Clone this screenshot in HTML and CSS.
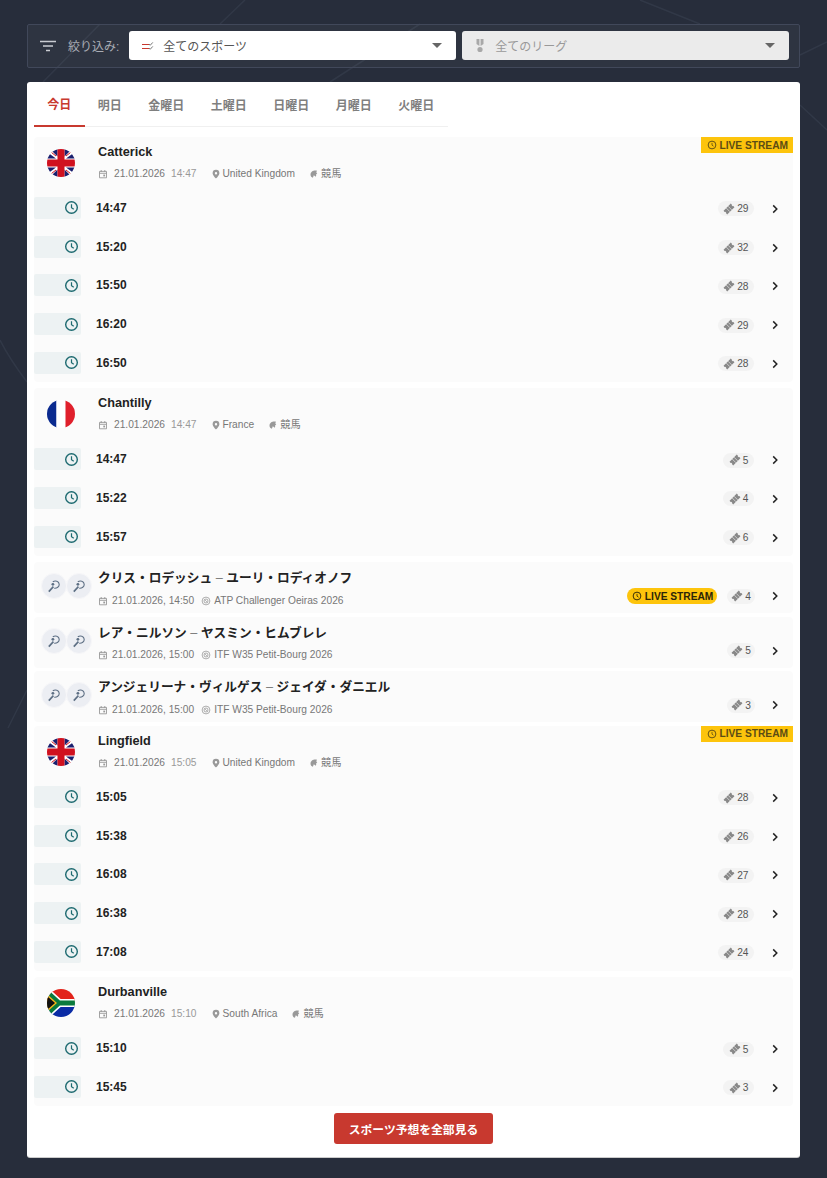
FILE: index.html
```html
<!DOCTYPE html>
<html lang="ja">
<head>
  <meta charset="UTF-8">
  <meta name="viewport" content="width=device-width, initial-scale=1.0">
  <title>スポーツ予想</title>
  <link rel="stylesheet" href="styles.css">
</head>
<body>

  <!-- Icon sprite -->
  <svg class="sprite" width="0" height="0">
    <symbol id="i-clock" viewBox="0 0 16 16"><circle cx="8" cy="8" r="6.2" fill="none" stroke="currentColor" stroke-width="1.5"/><path d="M8 4.6V8.2l2.4 1.7" fill="none" stroke="currentColor" stroke-width="1.3"/></symbol>
    <symbol id="i-ticket" viewBox="0 0 14 14"><g transform="rotate(-45 7 7)"><path d="M1 4h12v1.800a1.300 1.300 0 0 0 0 2.400V10H1V8.200a1.300 1.300 0 0 0 0-2.400z" fill="currentColor"/><path d="M5.500 4v6M8.500 4v6" stroke="#f3f3f3" stroke-width=".7"/></g></symbol>
    <symbol id="i-chevron" viewBox="0 0 8 10"><path d="M2.2 1.4 5.800 5 2.200 8.600" fill="none" stroke="currentColor" stroke-width="1.5"/></symbol>
    <symbol id="i-calendar" viewBox="0 0 10 10"><path d="M1.500 2.400h7v6.400h-7zM1.500 4.300h7M3.200 1v2M6.800 1v2" fill="none" stroke="currentColor" stroke-width=".9"/><rect x="5.300" y="5.600" width="1.800" height="1.800" fill="currentColor"/></symbol>
    <symbol id="i-pin" viewBox="0 0 10 10"><path fill-rule="evenodd" d="M5 .8a3.400 3.400 0 0 1 3.400 3.400C8.400 6.400 5 9.400 5 9.400S1.600 6.400 1.600 4.200A3.400 3.400 0 0 1 5 .8zm0 2.200a1.200 1.200 0 1 0 0 2.400 1.200 1.200 0 0 0 0-2.400z" fill="currentColor"/></symbol>
    <symbol id="i-horse" viewBox="0 0 10 10"><path d="M7.800 1.600C5 .9 1.500 2.300 1.500 5.600c0 1.700 1 2.900 2.400 3.200l.9-2.500 2 1.400c.5-.8.5-1.700.2-2.400l1.300-.4-.9-1.200z" fill="currentColor"/></symbol>
    <symbol id="i-target" viewBox="0 0 10 10"><circle cx="5" cy="5" r="3.900" fill="none" stroke="currentColor" stroke-width=".8"/><circle cx="5" cy="5" r="2" fill="none" stroke="currentColor" stroke-width=".8"/><path d="M3.600 3.600 6.400 6.400" stroke="currentColor" stroke-width=".7"/></symbol>
    <symbol id="i-racket" viewBox="0 0 16 16"><path d="M6.800 3.800C9.200 2.200 13 3 13.200 6.200 13.400 8.800 10.800 10.500 8.200 10.200" fill="none" stroke="currentColor" stroke-width="1.100"/><path d="M7.400 8.600 2.800 13.600" stroke="currentColor" stroke-width="1.600"/><circle cx="6.900" cy="6.300" r="1.400" fill="currentColor"/></symbol>
    <symbol id="i-flag-uk" viewBox="0 0 28 28"><rect width="28" height="28" fill="#fff"/><path d="M0 3 9 9.500H0zM3 0h7.500v7.500zM28 3l-9 6.500h9zM25 0h-7.500v7.500zM0 25l9-6.500H0zM3 28h7.500v-7.500zM28 25l-9-6.500h9zM25 28h-7.500v-7.500z" fill="#1a1f6e"/><path d="M10.500 0h7v28h-7zM0 10.500h28v7H0z" fill="#d0111f"/><path d="M0 0 9 7M28 0 19 7M0 28 9 21M28 28 19 21" stroke="#d0111f" stroke-width="1"/></symbol>
    <symbol id="i-flag-fr" viewBox="0 0 28 28"><rect width="9.500" height="28" fill="#0a2a8f"/><rect x="9.500" width="9" height="28" fill="#fff"/><rect x="18.500" width="9.500" height="28" fill="#e0202c"/></symbol>
    <symbol id="i-flag-za" viewBox="0 0 28 28"><rect width="28" height="14" fill="#e2231a"/><rect y="14" width="28" height="14" fill="#0a2ba5"/><path d="M0 3 12 14h16M0 25 12 14" fill="none" stroke="#fff" stroke-width="8"/><path d="M0 3 12 14h16M0 25 12 14" fill="none" stroke="#0a7a3e" stroke-width="5"/><path d="M0 5 10 14 0 23z" fill="#f5b81c"/><path d="M0 7 8 14 0 21z" fill="#111"/></symbol>
  </svg>

  <!-- Background lines -->
  <svg class="bg-lines" viewBox="0 0 827 1178" width="827" height="1178">
    <path d="M0 340C8 356 18 370 27 382M43 82 100 24M220 24 245 0M330 82 420 24M640 0 700 24M800 55 827 42M800 105 827 130M8 728 27 690"/>
  </svg>

  <div class="filter-bar">
    <svg class="filter-icon" viewBox="0 0 16 12" width="16" height="12"><path d="M0 1.500h16M3 6h10M6 10.500h4" stroke="#c9ccd2" stroke-width="1.500"/></svg>
    <span class="filter-label">絞り込み:</span>
    <div class="select">
      <svg class="select-icon" viewBox="0 0 14 10" width="14" height="10"><path d="M1 3.500h7M1 7.500h7" stroke="#c8392f" stroke-width="1.200"/><path d="M8 3.200l1.300 1 2.500-2.800M8 7.200l1.300 1 2.500-2.800" fill="none" stroke="#777" stroke-width="1"/></svg>
      <span>全てのスポーツ</span>
      <i class="caret"></i>
    </div>
    <div class="select select-off">
      <svg class="select-icon" viewBox="0 0 12 16" width="12" height="16"><path d="M2.500 1H5.400V8L2.500 6zM6.600 1H9.500V6L6.600 8z" fill="#a8a8a8"/><circle cx="6" cy="11.500" r="2.600" fill="#a8a8a8"/></svg>
      <span>全てのリーグ</span>
      <i class="caret"></i>
    </div>
  </div>

  <div class="card">
    <div class="tabs">
      <a class="tab active">今日</a>
      <a class="tab">明日</a>
      <a class="tab">金曜日</a>
      <a class="tab">土曜日</a>
      <a class="tab">日曜日</a>
      <a class="tab">月曜日</a>
      <a class="tab">火曜日</a>
    </div>

    <!-- Catterick -->
    <section class="group">
      <span class="live live-corner"><svg width="10" height="10"><use href="#i-clock"/></svg>LIVE STREAM</span>
      <header class="group-head">
        <svg class="flag"><use href="#i-flag-uk"/></svg>
        <div>
          <h3 class="name">Catterick</h3>
          <p class="meta">
            <svg><use href="#i-calendar"/></svg><span class="date">21.01.2026</span><span class="time">14:47</span>
            <svg class="pin"><use href="#i-pin"/></svg><span>United Kingdom</span>
            <svg class="pin"><use href="#i-horse"/></svg><span>競馬</span>
          </p>
        </div>
      </header>
      <div class="race"><span class="race-clock"><svg><use href="#i-clock"/></svg></span><b>14:47</b><span class="count"><svg><use href="#i-ticket"/></svg>29</span><svg class="chevron"><use href="#i-chevron"/></svg></div>
      <div class="race"><span class="race-clock"><svg><use href="#i-clock"/></svg></span><b>15:20</b><span class="count"><svg><use href="#i-ticket"/></svg>32</span><svg class="chevron"><use href="#i-chevron"/></svg></div>
      <div class="race"><span class="race-clock"><svg><use href="#i-clock"/></svg></span><b>15:50</b><span class="count"><svg><use href="#i-ticket"/></svg>28</span><svg class="chevron"><use href="#i-chevron"/></svg></div>
      <div class="race"><span class="race-clock"><svg><use href="#i-clock"/></svg></span><b>16:20</b><span class="count"><svg><use href="#i-ticket"/></svg>29</span><svg class="chevron"><use href="#i-chevron"/></svg></div>
      <div class="race"><span class="race-clock"><svg><use href="#i-clock"/></svg></span><b>16:50</b><span class="count"><svg><use href="#i-ticket"/></svg>28</span><svg class="chevron"><use href="#i-chevron"/></svg></div>
    </section>

    <!-- Chantilly -->
    <section class="group">
      <header class="group-head">
        <svg class="flag"><use href="#i-flag-fr"/></svg>
        <div>
          <h3 class="name">Chantilly</h3>
          <p class="meta">
            <svg><use href="#i-calendar"/></svg><span class="date">21.01.2026</span><span class="time">14:47</span>
            <svg class="pin"><use href="#i-pin"/></svg><span>France</span>
            <svg class="pin"><use href="#i-horse"/></svg><span>競馬</span>
          </p>
        </div>
      </header>
      <div class="race"><span class="race-clock"><svg><use href="#i-clock"/></svg></span><b>14:47</b><span class="count"><svg><use href="#i-ticket"/></svg>5</span><svg class="chevron"><use href="#i-chevron"/></svg></div>
      <div class="race"><span class="race-clock"><svg><use href="#i-clock"/></svg></span><b>15:22</b><span class="count"><svg><use href="#i-ticket"/></svg>4</span><svg class="chevron"><use href="#i-chevron"/></svg></div>
      <div class="race"><span class="race-clock"><svg><use href="#i-clock"/></svg></span><b>15:57</b><span class="count"><svg><use href="#i-ticket"/></svg>6</span><svg class="chevron"><use href="#i-chevron"/></svg></div>
    </section>

    <!-- Tennis -->
    <div class="match">
      <div class="avatars"><span><svg><use href="#i-racket"/></svg></span><span><svg><use href="#i-racket"/></svg></span></div>
      <div class="match-info">
        <h3 class="name">クリス・ロデッシュ <em>–</em> ユーリ・ロディオノフ</h3>
        <p class="meta meta-match"><svg><use href="#i-calendar"/></svg><span>21.01.2026, 14:50</span><svg class="pin"><use href="#i-target"/></svg><span>ATP Challenger Oeiras 2026</span></p>
      </div>
      <span class="live live-pill"><svg width="10" height="10"><use href="#i-clock"/></svg>LIVE STREAM</span>
      <span class="count"><svg><use href="#i-ticket"/></svg>4</span><svg class="chevron"><use href="#i-chevron"/></svg>
    </div>
    <div class="match">
      <div class="avatars"><span><svg><use href="#i-racket"/></svg></span><span><svg><use href="#i-racket"/></svg></span></div>
      <div class="match-info">
        <h3 class="name">レア・ニルソン <em>–</em> ヤスミン・ヒムブレレ</h3>
        <p class="meta meta-match"><svg><use href="#i-calendar"/></svg><span>21.01.2026, 15:00</span><svg class="pin"><use href="#i-target"/></svg><span>ITF W35 Petit-Bourg 2026</span></p>
      </div>
      <span class="count"><svg><use href="#i-ticket"/></svg>5</span><svg class="chevron"><use href="#i-chevron"/></svg>
    </div>
    <div class="match">
      <div class="avatars"><span><svg><use href="#i-racket"/></svg></span><span><svg><use href="#i-racket"/></svg></span></div>
      <div class="match-info">
        <h3 class="name">アンジェリーナ・ヴィルゲス <em>–</em> ジェイダ・ダニエル</h3>
        <p class="meta meta-match"><svg><use href="#i-calendar"/></svg><span>21.01.2026, 15:00</span><svg class="pin"><use href="#i-target"/></svg><span>ITF W35 Petit-Bourg 2026</span></p>
      </div>
      <span class="count"><svg><use href="#i-ticket"/></svg>3</span><svg class="chevron"><use href="#i-chevron"/></svg>
    </div>

    <!-- Lingfield -->
    <section class="group">
      <span class="live live-corner"><svg width="10" height="10"><use href="#i-clock"/></svg>LIVE STREAM</span>
      <header class="group-head">
        <svg class="flag"><use href="#i-flag-uk"/></svg>
        <div>
          <h3 class="name">Lingfield</h3>
          <p class="meta">
            <svg><use href="#i-calendar"/></svg><span class="date">21.01.2026</span><span class="time">15:05</span>
            <svg class="pin"><use href="#i-pin"/></svg><span>United Kingdom</span>
            <svg class="pin"><use href="#i-horse"/></svg><span>競馬</span>
          </p>
        </div>
      </header>
      <div class="race"><span class="race-clock"><svg><use href="#i-clock"/></svg></span><b>15:05</b><span class="count"><svg><use href="#i-ticket"/></svg>28</span><svg class="chevron"><use href="#i-chevron"/></svg></div>
      <div class="race"><span class="race-clock"><svg><use href="#i-clock"/></svg></span><b>15:38</b><span class="count"><svg><use href="#i-ticket"/></svg>26</span><svg class="chevron"><use href="#i-chevron"/></svg></div>
      <div class="race"><span class="race-clock"><svg><use href="#i-clock"/></svg></span><b>16:08</b><span class="count"><svg><use href="#i-ticket"/></svg>27</span><svg class="chevron"><use href="#i-chevron"/></svg></div>
      <div class="race"><span class="race-clock"><svg><use href="#i-clock"/></svg></span><b>16:38</b><span class="count"><svg><use href="#i-ticket"/></svg>28</span><svg class="chevron"><use href="#i-chevron"/></svg></div>
      <div class="race"><span class="race-clock"><svg><use href="#i-clock"/></svg></span><b>17:08</b><span class="count"><svg><use href="#i-ticket"/></svg>24</span><svg class="chevron"><use href="#i-chevron"/></svg></div>
    </section>

    <!-- Durbanville -->
    <section class="group">
      <header class="group-head">
        <svg class="flag"><use href="#i-flag-za"/></svg>
        <div>
          <h3 class="name">Durbanville</h3>
          <p class="meta">
            <svg><use href="#i-calendar"/></svg><span class="date">21.01.2026</span><span class="time">15:10</span>
            <svg class="pin"><use href="#i-pin"/></svg><span>South Africa</span>
            <svg class="pin"><use href="#i-horse"/></svg><span>競馬</span>
          </p>
        </div>
      </header>
      <div class="race"><span class="race-clock"><svg><use href="#i-clock"/></svg></span><b>15:10</b><span class="count"><svg><use href="#i-ticket"/></svg>5</span><svg class="chevron"><use href="#i-chevron"/></svg></div>
      <div class="race"><span class="race-clock"><svg><use href="#i-clock"/></svg></span><b>15:45</b><span class="count"><svg><use href="#i-ticket"/></svg>3</span><svg class="chevron"><use href="#i-chevron"/></svg></div>
    </section>

    <div class="more"><a class="more-btn">スポーツ予想を全部見る</a></div>
  </div>

</body>
</html>
```

FILE: styles.css
```css
* {
  box-sizing: border-box;
}

body {
  margin: 0;
  padding: 24px 27px 20px;
  position: relative;
  background-color: #272d3b;
  font-family: 'Liberation Sans', 'Noto Sans CJK JP', sans-serif;
  font-size: 12px;
  color: #222;
  overflow-x: hidden;
}

.sprite {
  position: absolute;
}

.bg-lines {
  position: absolute;
  top: 0;
  left: 0;
}

.bg-lines path {
  fill: none;
  stroke: #313847;
  stroke-width: 1.5;
}

/* Filter bar */
.filter-bar {
  position: relative;
  display: flex;
  align-items: center;
  height: 44px;
  padding: 0 10px 1px 12px;
  background-color: rgba(255, 255, 255, 0.035);
  border: 1px solid #41485a;
  border-radius: 2px;
}

.filter-icon {
  margin-right: 12px;
}

.filter-label {
  color: #a9adb5;
  margin-right: 10px;
  white-space: nowrap;
}

.select {
  flex: 1;
  display: flex;
  align-items: center;
  height: 29px;
  padding: 0 14px 0 12px;
  background-color: #fff;
  border-radius: 3px;
  color: #555;
}

.select + .select {
  margin-left: 6px;
}

.select-off {
  background-color: #ebebeb;
  color: #999;
}

.select-icon {
  margin-right: 8px;
}

.select-off .select-icon {
  margin-right: 9px;
}

.select span {
  flex: 1;
}

.caret {
  width: 0;
  height: 0;
  border-left: 5px solid transparent;
  border-right: 5px solid transparent;
  border-top: 5px solid #666;
}

/* Card */
.card {
  position: relative;
  margin-top: 14px;
  padding: 0 7px 13px;
  background-color: #fff;
  border-radius: 3px;
  box-shadow: 0 1px 0 #ccc;
}

.tabs {
  display: flex;
  width: 414px;
  height: 45px;
  margin-bottom: 10px;
  border-bottom: 1px solid #f0f0f0;
}

.tab {
  display: flex;
  align-items: center;
  height: 45px;
  padding: 0 13.25px;
  color: #7f7f7f;
  font-weight: 700;
  white-space: nowrap;
}

.tab.active {
  color: #c8392f;
  border-bottom: 2px solid #c8392f;
}

/* Groups */
.group {
  position: relative;
  margin-bottom: 6px;
  background-color: #fbfbfb;
  border-radius: 4px;
}

.group-head {
  display: flex;
  height: 51.5px;
  padding-left: 13px;
}

.flag {
  flex: none;
  width: 28px;
  height: 28px;
  margin: 12px 23px 0 0;
  border-radius: 50%;
}

.name {
  margin: 0;
  padding-top: 8px;
  font-size: 12.7px;
  line-height: 15px;
  font-weight: 700;
  color: #222;
}

.name em {
  font-style: normal;
  font-weight: 400;
  color: #777;
}

.meta {
  display: flex;
  align-items: center;
  margin: 7px 0 0;
  font-size: 10.2px;
  line-height: 14px;
  color: #777;
}

.meta svg {
  width: 10px;
  height: 10px;
  margin-right: 6px;
  color: #999;
}

.meta .pin {
  margin-left: 14px;
  margin-right: 2px;
}

.meta .time {
  margin-left: 6px;
  color: #999;
}

.live {
  display: flex;
  align-items: center;
  font-size: 10.2px;
  font-weight: 700;
  white-space: nowrap;
  background-color: #fdc40c;
}

.live svg {
  margin-right: 3px;
}

.live-corner {
  position: absolute;
  top: 0;
  right: 0;
  height: 16px;
  padding: 0 5px 0 6px;
  color: #5c4c14;
}

.live-pill {
  flex: none;
  height: 16px;
  margin-right: 10px;
  padding: 0 4px 0 5px;
  border-radius: 8px;
  color: #2b2508;
}

/* Race rows */
.race {
  display: flex;
  align-items: center;
  height: 38.75px;
  padding-right: 14px;
}

.race-clock {
  display: flex;
  align-items: center;
  justify-content: flex-end;
  width: 47px;
  height: 22px;
  padding-right: 2px;
  background-color: #edf2f3;
  border-radius: 2px;
  color: #1d6a70;
}

.race-clock svg {
  width: 15px;
  height: 15px;
}

.race b {
  flex: 1;
  margin-left: 15px;
  font-size: 12px;
}

.count {
  display: flex;
  align-items: center;
  height: 15px;
  margin-top: 2px;
  padding: 0 5.5px;
  background-color: #f3f3f3;
  border-radius: 8px;
  font-size: 10.2px;
  color: #555;
}

.count svg {
  width: 12px;
  height: 12px;
  margin-right: 2px;
  color: #888;
}

.chevron {
  flex: none;
  width: 8px;
  height: 10px;
  margin: 2px 0 0 17px;
  color: #222;
}

/* Tennis rows */
.match {
  display: flex;
  align-items: flex-start;
  height: 51px;
  margin-bottom: 3.67px;
  padding: 0 14px 0 7px;
  background-color: #fbfbfb;
  border-radius: 4px;
}

.avatars {
  display: flex;
  flex: none;
  width: 57px;
  margin-top: 11px;
}

.avatars span {
  display: flex;
  align-items: center;
  justify-content: center;
  width: 26px;
  height: 26px;
  margin-right: -1px;
  background-color: #eceef3;
  border: 1px solid #f7f7f9;
  border-radius: 50%;
  color: #5d6f84;
}

.avatars svg {
  width: 16px;
  height: 16px;
}

.match-info {
  flex: 1;
  padding-top: 9px;
}

.match-info .name {
  padding-top: 0;
}

.meta-match {
  margin-top: 7.5px;
}

.meta-match svg {
  margin-right: 4px;
}

.meta-match .pin {
  margin-left: 7px;
  margin-right: 3px;
}

.match .live {
  margin-top: 26px;
}

.match .count {
  margin-top: 26.5px;
  padding: 0 4px;
}

.match .chevron {
  margin: 29px 0 0 16px;
}

/* Footer button */
.more {
  display: flex;
  justify-content: center;
  padding-top: 0.5px;
}

.more-btn {
  display: flex;
  align-items: center;
  height: 31px;
  padding: 0 14.5px;
  background-color: #c8392f;
  border-radius: 3px;
  font-size: 11.8px;
  color: #fff;
  font-weight: 700;
}
```
